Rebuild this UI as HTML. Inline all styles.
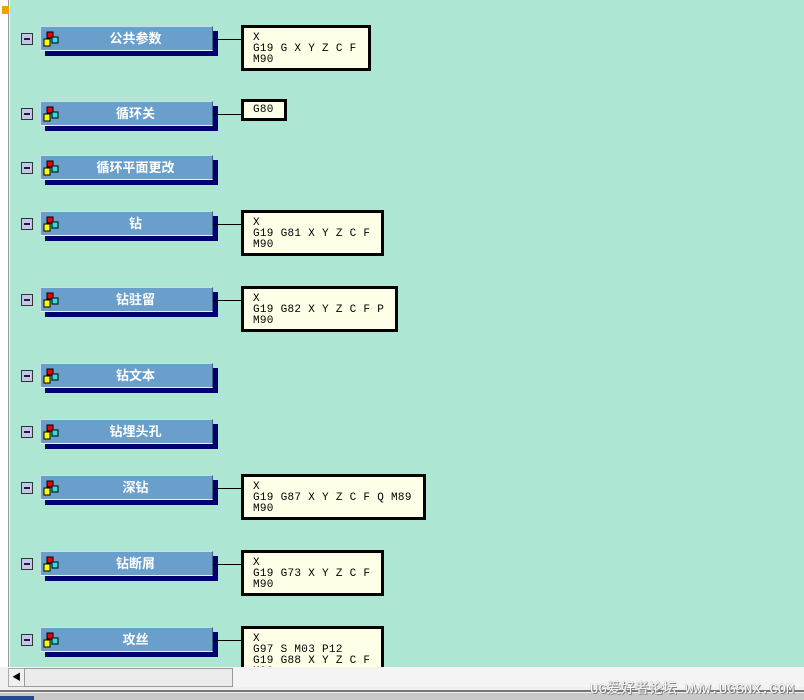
<!DOCTYPE html><html><head><meta charset="utf-8"><style>
body{margin:0;width:804px;height:700px;overflow:hidden;background:#f0f0f0;position:relative;font-family:"Liberation Sans","Noto Sans CJK SC",sans-serif}
.a{position:absolute}
#main{left:10px;top:0;width:794px;height:667px;background:#ade6d3;overflow:hidden}
.mn{position:absolute;left:11px;width:10px;height:10px;border:1px solid #333;background:#c4c4ec}
.mn:after{content:"";position:absolute;left:2px;top:4px;width:6px;height:2px;background:#222}
.sh{position:absolute;width:173px;height:25px;background:#000070}
.nd{position:absolute;left:30px;width:171px;height:23px;background:#6a9fcb;border-top:1px solid #c8dcee;border-left:1px solid #c8dcee;border-right:1px solid #3a5f80;border-bottom:1px solid #e8f0f8;color:#fff;font-weight:bold;font-size:13px;line-height:23px;text-align:center}
.nd span{position:relative;left:9px}
.ic{position:absolute;left:2px;top:4px;width:17px;height:16px}
.ln{position:absolute;left:203px;width:28px;height:1px;background:#000}
.cb{position:absolute;left:231px;border:3px solid #000;background:#fffee6;font-family:"Liberation Mono",monospace;font-size:11px;line-height:11px;letter-spacing:0.3px;padding:5px 11px 2px 9px;white-space:pre;color:#000}
</style></head><body>
<div class="a" style="left:0;top:0;width:8px;height:667px;background:#fff"></div>
<div class="a" style="left:8px;top:0;width:1px;height:667px;background:#999"></div>
<div class="a" style="left:2px;top:6px;width:7px;height:8px;background:#f0a000"></div>
<div id="main" class="a">
<svg width="0" height="0" style="position:absolute"><defs><g id="i"><rect x="4" y="1" width="6" height="6" fill="#e00" stroke="#000" stroke-width="1"/><rect x="1" y="8" width="6" height="7" fill="#ff0" stroke="#000"/><rect x="9" y="6" width="6" height="6" fill="#3dd" stroke="#000"/></g></defs></svg>
</div>
<script>
var rows=[[26,"公共参数","X\nG19 G X Y Z C F\nM90"],[101,"循环关","G80"],[155,"循环平面更改",null],[211,"钻","X\nG19 G81 X Y Z C F\nM90"],[287,"钻驻留","X\nG19 G82 X Y Z C F P\nM90"],[363,"钻文本",null],[419,"钻埋头孔",null],[475,"深钻","X\nG19 G87 X Y Z C F Q M89\nM90"],[551,"钻断屑","X\nG19 G73 X Y Z C F\nM90"],[627,"攻丝","X\nG97 S M03 P12\nG19 G88 X Y Z C F\nM90"]];
var h="";
rows.forEach(function(r){var y=r[0];
h+='<div class="mn" style="top:'+(y+7)+'px"></div>';
h+='<div class="sh" style="left:35px;top:'+(y+5)+'px"></div>';
h+='<div class="nd" style="top:'+y+'px"><svg class="ic" viewBox="0 0 17 16"><use href="#i"/></svg><span>'+r[1]+'</span></div>';
if(r[2]){h+='<div class="ln" style="top:'+(y+13)+'px"></div>';
var t=r[2]=="G80"?-2:-1;
h+='<div class="cb" style="top:'+(y+t)+'px'+(r[2]=="G80"?';padding:3px 10px 2px 9px':'')+'">'+r[2]+'</div>';}
});
document.getElementById("main").insertAdjacentHTML("beforeend",h);
</script>
<div class="a" style="left:8px;top:667px;width:796px;height:20px;background:#f4f4f4"></div>
<div class="a" style="left:8px;top:668px;width:15px;height:17px;background:#f0f0f0;border:1px solid #aaa;font-size:9px;line-height:17px;text-align:center">◀</div>
<div class="a" style="left:24px;top:668px;width:207px;height:17px;background:#ececec;border:1px solid #999"></div>
<div class="a" style="left:0;top:690px;width:804px;height:2px;background:#777"></div>
<div class="a" style="left:0;top:693px;width:804px;height:7px;background:#c8c8c8"></div>
<div class="a" style="left:0;top:696px;width:34px;height:4px;background:#234a8a"></div>
<div class="a" style="left:590px;top:678px;font-size:14px;color:#fff;text-shadow:0 0 1px #666,1px 1px 0 #888;font-family:'Liberation Mono','Noto Sans CJK SC',monospace">UG爱好者论坛 WWW.UGSNX.COM</div>
</body></html>
